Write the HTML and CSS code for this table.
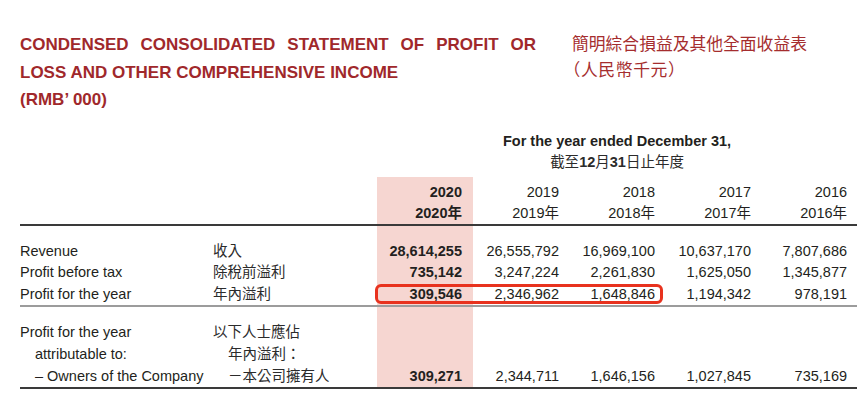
FILE: index.html
```html
<!DOCTYPE html>
<html lang="en">
<head>
<meta charset="utf-8">
<title>Condensed Consolidated Statement of Profit or Loss</title>
<link rel="stylesheet" href="styles.css">
</head>
<body>
<div class="page">
  <header class="titles">
    <h1 class="title-en">CONDENSED CONSOLIDATED STATEMENT OF PROFIT OR LOSS AND OTHER COMPREHENSIVE INCOME<br>(RMB’ 000)</h1>
    <h2 class="title-zh">簡明綜合損益及其他全面收益表<br><span class="unit">（人民幣千元）</span></h2>
  </header>

  <table class="fin">
    <colgroup>
      <col class="c-en"><col class="c-zh">
      <col class="c-num"><col class="c-num"><col class="c-num"><col class="c-num"><col class="c-num">
    </colgroup>
    <thead>
      <tr class="period">
        <th></th><th></th>
        <th colspan="5">For the year ended December 31,<br><span class="zh">截至<b>12</b>月<b>31</b>日止年度</span></th>
      </tr>
      <tr class="years">
        <th></th><th></th>
        <th class="cur">2020<br>2020年</th>
        <th>2019<br>2019年</th>
        <th>2018<br>2018年</th>
        <th>2017<br>2017年</th>
        <th>2016<br>2016年</th>
      </tr>
    </thead>
    <tbody class="sec1">
      <tr class="gap"><td></td><td></td><td class="cur"></td><td></td><td></td><td></td><td></td></tr>
      <tr>
        <td>Revenue</td><td class="zh">收入</td>
        <td class="cur">28,614,255</td><td>26,555,792</td><td>16,969,100</td><td>10,637,170</td><td>7,807,686</td>
      </tr>
      <tr>
        <td>Profit before tax</td><td class="zh">除稅前溢利</td>
        <td class="cur">735,142</td><td>3,247,224</td><td>2,261,830</td><td>1,625,050</td><td>1,345,877</td>
      </tr>
      <tr class="last">
        <td>Profit for the year</td><td class="zh">年內溢利</td>
        <td class="cur hl"><span class="mark"></span>309,546</td><td>2,346,962</td><td>1,648,846</td><td>1,194,342</td><td>978,191</td>
      </tr>
    </tbody>
    <tbody class="sec2">
      <tr class="gap"><td></td><td></td><td class="cur"></td><td></td><td></td><td></td><td></td></tr>
      <tr>
        <td>Profit for the year</td><td class="zh">以下人士應佔</td>
        <td class="cur"></td><td></td><td></td><td></td><td></td>
      </tr>
      <tr>
        <td class="ind">attributable to:</td><td class="zh ind">年內溢利：</td>
        <td class="cur"></td><td></td><td></td><td></td><td></td>
      </tr>
      <tr class="last">
        <td class="ind">– Owners of the Company</td><td class="zh ind">－本公司擁有人</td>
        <td class="cur">309,271</td><td>2,344,711</td><td>1,646,156</td><td>1,027,845</td><td>735,169</td>
      </tr>
    </tbody>
  </table>
</div>
</body>
</html>
```
FILE: styles.css
```css
html, body {
  margin: 0;
  padding: 0;
  background: #ffffff;
}

.page {
  width: 864px;
  padding: 31px 0 0 20px;
  box-sizing: border-box;
  font-family: "Liberation Sans", Arial, "Noto Sans CJK TC", sans-serif;
  color: #231f20;
}

.titles {
  display: flex;
  align-items: flex-start;
}

.title-en {
  width: 516px;
  margin: 0;
  font-size: 17px;
  line-height: 27.5px;
  font-weight: bold;
  color: #a0282b;
  text-align: justify;
}

.title-zh {
  margin: -1.5px 0 0 36px;
  font-family: "Noto Sans CJK TC", sans-serif;
  font-size: 16.8px;
  line-height: 26px;
  font-weight: normal;
  color: #a52d2e;
}

.unit {
  font-feature-settings: "halt";
  letter-spacing: 0.6px;
}

.fin {
  margin-top: 17.5px;
  border-collapse: separate;
  border-spacing: 0;
  table-layout: fixed;
  width: 837px;
  font-size: 14.5px;
}

.c-en { width: 193px; }
.c-zh { width: 164px; }
.c-num { width: 96px; }

.fin th,
.fin td {
  padding: 0 10px 0 0;
  text-align: right;
  white-space: nowrap;
}

.fin td:first-child,
.fin td:nth-child(2),
.fin th:first-child,
.fin th:nth-child(2) {
  text-align: left;
  padding: 0;
}

.zh {
  font-family: "Liberation Sans", "Noto Sans CJK TC", sans-serif;
  color: #2b2b2b;
}

.period th {
  font-weight: bold;
  text-align: center;
  line-height: 21px;
  padding: 0 0 4px 0;
}

.period .zh {
  font-weight: normal;
}

.period .zh b {
  font-weight: bold;
}

.years th {
  font-weight: normal;
  line-height: 21px;
  padding-top: 4.5px;
  padding-bottom: 0.5px;
  border-bottom: 2px solid #3a3a3a;
}

.cur {
  background: #f6d6d1;
  font-weight: bold;
}

.years th.cur {
  font-weight: bold;
  padding-right: 11px;
}

.sec1 td {
  line-height: 21.6px;
}

.sec1 .gap td {
  height: 14.6px;
  line-height: 0;
}

.sec1 .last td {
  border-bottom: 2px solid #9c9c9c;
}

.sec2 td {
  line-height: 22px;
}

.sec2 .gap td {
  height: 14px;
  line-height: 0;
}

.sec2 .last td {
  border-bottom: 2px solid #3a3a3a;
}

.fin td.cur {
  padding-right: 11px;
}

.fin td.ind {
  padding-left: 15px;
}

.hl {
  position: relative;
}

.mark {
  position: absolute;
  left: -2px;
  top: 0;
  width: 288px;
  height: 20px;
  box-sizing: border-box;
  border: 3px solid #e8321e;
  border-radius: 6px;
  pointer-events: none;
}
```
